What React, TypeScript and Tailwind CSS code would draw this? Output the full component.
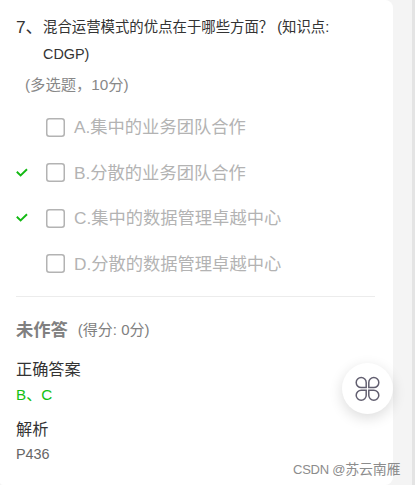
const options = [
  { text: 'A.集中的业务团队合作', correct: false },
  { text: 'B.分散的业务团队合作', correct: true },
  { text: 'C.集中的数据管理卓越中心', correct: true },
  { text: 'D.分散的数据管理卓越中心', correct: false },
];

function Check() {
  return (
    <svg width="13" height="10" viewBox="0 0 13 10" fill="none" stroke="#13b913" strokeWidth="1.9">
      <path d="M0.8 3.8 4.6 7.5 11 1.3" />
    </svg>
  );
}

function CloverIcon() {
  return (
    <svg width="25" height="26" viewBox="0 0 25 26" fill="none" stroke="#625f70" strokeWidth="1.5">
      <path d="M11.2 11.6H6.2A5 5 0 1 1 11.2 6.6Z" />
      <path d="M13.8 11.6H18.8A5 5 0 1 0 13.8 6.6Z" />
      <path d="M11.2 14.2H6.2A5 5 0 1 0 11.2 19.2Z" />
      <path d="M13.8 14.2H18.8A5 5 0 1 1 13.8 19.2Z" />
    </svg>
  );
}

export default function App() {
  return (
    <div className="relative flex h-[485px] w-[415px] overflow-hidden bg-[#f4f4f4] font-['Liberation_Sans','Noto_Sans_CJK_SC',sans-serif]">
      <main className="h-full w-[393px] rounded-r-lg rounded-bl-[3px] bg-white pt-[14px] pl-4">
        <div className="flex text-[#333]">
          <span className="w-[27px] shrink-0 text-[17.3px] leading-[27px]">7、</span>
          <h1 className="text-[14.4px] leading-[27px] whitespace-nowrap">
            混合运营模式的优点在于哪些方面？ (知识点:
            <br />
            CDGP)
          </h1>
        </div>
        <p className="mt-[5px] pl-[9px] text-[15.3px] leading-[24px] text-[#888]">(多选题，10分)</p>
        <ul className="mt-[7.4px]">
          {options.map((o) => (
            <li key={o.text} className="flex h-[45.6px] items-center">
              <span className="w-[30px] shrink-0">{o.correct && <Check />}</span>
              <svg className="mr-[9px] shrink-0" width="19" height="19" fill="none" stroke="#b3b3b3" strokeWidth="1.5">
                <rect x="0.75" y="0.75" width="17.5" height="17.5" rx="2.5" />
              </svg>
              <span className="text-[17.28px] leading-6 whitespace-nowrap text-[#b3b3b3]">{o.text}</span>
            </li>
          ))}
        </ul>
        <hr className="mt-[9.2px] w-[359px] border-[#ececec]" />
        <div className="mt-[21px] flex h-6 items-center gap-[10px] text-[#808080]">
          <b className="text-[17.28px] leading-6">未作答</b>
          <span className="text-[15px] leading-6">(得分: 0分)</span>
        </div>
        <h2 className="mt-[15px] text-[16.2px] leading-6 text-[#333]">正确答案</h2>
        <p className="mt-[2px] text-[15.2px] leading-6 text-[#13c113]">B、C</p>
        <h2 className="mt-[10px] text-[16.2px] leading-6 text-[#333]">解析</h2>
        <p className="mt-px text-[14.4px] leading-6 text-[#666]">P436</p>
      </main>
      <div className="ml-auto w-[3px] bg-[#e4e4e4]" />
      <button className="absolute top-[363px] left-[342px] flex size-[51px] items-center justify-center rounded-full bg-white shadow-[0_4px_14px_rgba(0,0,0,0.14)]">
        <CloverIcon />
      </button>
      <span className="absolute top-[459px] left-[293px] text-[14px] leading-5 tracking-[-0.2px] whitespace-nowrap text-[#8c8c8c]">
        <span className="text-[13px] tracking-[-0.25px]">CSDN @</span>苏云南雁
      </span>
    </div>
  );
}
